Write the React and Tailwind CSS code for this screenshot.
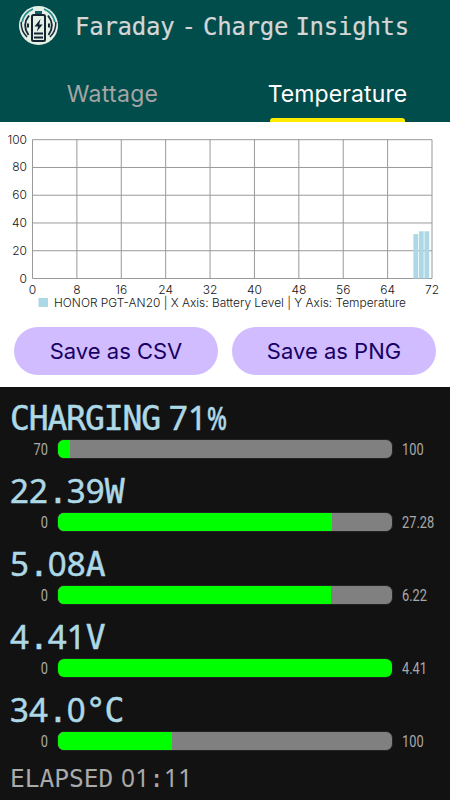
const GRID_X = [0, 8, 16, 24, 32, 40, 48, 56, 64, 72]
const GRID_Y = [0, 20, 40, 60, 80, 100]

const samples = [
  { level: 69, temp: 32 },
  { level: 70, temp: 34 },
  { level: 71, temp: 34 }
]

const metrics = [
  { label: 'CHARGING 71%', min: '70', max: '100', fill: 3.6 },
  { label: '22.39W', min: '0', max: '27.28', fill: 82.1 },
  { label: '5.08A', min: '0', max: '6.22', fill: 81.7 },
  { label: '4.41V', min: '0', max: '4.41', fill: 100 },
  { label: '34.0°C', min: '0', max: '100', fill: 34.2 }
]

// digits use an undotted zero, everything else stays monospaced
function MonoText({ text }) {
  return text.split(/(\d+|%)/).map((part, i) => {
    if (part === '%') {
      return <span key={i} className="inline-block w-[19px] origin-left scale-x-[0.71] font-['Noto_Sans',sans-serif] font-medium">%</span>
    }
    return /\d/.test(part)
      ? <span key={i} className="font-['Noto_Sans',sans-serif] tracking-[0.004em]">{part}</span>
      : <span key={i}>{part}</span>
  })
}

function Logo() {
  return (
    <svg className="size-10 shrink-0" viewBox="0 0 40 40" fill="none">
      <circle cx="20.5" cy="20.5" r="19.5" fill="#e4efe6" />
      <path d="M15 4Q6 8 4 17" stroke="#258e91" strokeWidth="1.8" />
      <path d="M26 4Q35 8 37 17" stroke="#258e91" strokeWidth="1.8" />
      <path d="M3.2 17Q2.8 26 9 32M37.8 17Q38.2 26 32 32" stroke="#182c3b" strokeWidth="1.5" />
      <path d="M11 10.5Q3.5 20 10.5 30M30 10.5Q37.5 20 30.5 30" stroke="#172936" strokeWidth="1.9" />
      <path d="M10 18.5v4M31 18.5v4" stroke="#172936" strokeWidth="2" />
      <path d="M17 6h7v4h-7z" fill="#155a69" />
      <rect x="14" y="10" width="13" height="26" rx="1.5" fill="#e4efe6" stroke="#142330" strokeWidth="2" />
      <path d="m22.5 14-6 7.500h3.700l-1.400 5 5.900-7h-3.500z" fill="#142330" />
      <path d="M16 28.500h9M16 32.500h9" stroke="#142330" strokeWidth="2.200" />
    </svg>
  )
}

function Chart() {
  const x = v => 32.5 + (v / 72) * 399.5
  const y = v => 156.5 - v * 1.388
  return (
    <svg className="block h-[197px] w-[450px] font-[Inter,sans-serif]" viewBox="0 0 450 197" fill="#151515">
      <g stroke="#999" strokeWidth="1">
        {GRID_X.map(v => <path key={v} d={`M${x(v)} 17.5V156.5`} />)}
        {GRID_Y.map(v => <path key={v} d={`M32.5 ${y(v)}H432`} />)}
      </g>
      {samples.map(s => (
        <rect key={s.level} x={x(s.level) - 2} y={y(s.temp)} width="4.8" height={s.temp * 1.388} fill="#add8e6" />
      ))}
      <g fontSize="12" fontWeight="300">
        {GRID_Y.map(v => <text key={v} x="27" y={y(v) + 4} textAnchor="end">{v}</text>)}
        {GRID_X.map(v => <text key={v} x={x(v)} y="172" textAnchor="middle">{v}</text>)}
        <text x="54" y="185" textLength="352" lengthAdjust="spacingAndGlyphs">HONOR PGT-AN20 | X Axis: Battery Level | Y Axis: Temperature</text>
      </g>
      <rect x="38.5" y="176" width="9.5" height="9" fill="#add8e6" />
    </svg>
  )
}

function Metric({ label, min, max, fill }) {
  return (
    <div className="h-[73.1px]">
      <div className="h-[45px] pt-px pl-[10px] font-['DejaVu_Sans_Mono',monospace] text-[33px] leading-[45px] tracking-[-1.1px] whitespace-nowrap text-[#add8e6] [-webkit-text-stroke:0.5px_#add8e6] [word-spacing:-10px]">
        <MonoText text={label} />
      </div>
      <div className="flex h-5 items-center font-[Roboto,sans-serif] text-base leading-5 text-[#aaa]">
        <div className="w-12 shrink-0">
          <div className="origin-right translate-y-px scale-x-[0.8] text-right">{min}</div>
        </div>
        <div className="ml-[9px] h-5 w-[336px] shrink-0 overflow-hidden rounded-[7px] border border-[#222] bg-[#808080]">
          <div className="h-full bg-[#00ff00]" style={{ width: `${fill}%` }} />
        </div>
        <div className="ml-[9px] origin-left translate-y-px scale-x-[0.8]">{max}</div>
      </div>
    </div>
  )
}

export default function App() {
  return (
    <div className="h-[800px] w-[450px] overflow-hidden bg-[#121212]">
      <header className="h-[122px] bg-[#004d4c]">
        <div className="flex h-[64px] items-start pt-[5px] pl-[18px]">
          <Logo />
          <h1 className="ml-[17px] pt-px font-['DejaVu_Sans_Mono',monospace] text-[24px] leading-[42px] tracking-[-0.25px] whitespace-nowrap text-[#d6d6d6] [-webkit-text-stroke:0.2px_#d6d6d6] [word-spacing:-7px]">
            Faraday - Charge Insights
          </h1>
        </div>
        <nav className="grid h-[58px] grid-cols-2 font-[Inter,sans-serif] text-[23px]">
          <button className="flex flex-col items-center pt-[12px] leading-[36px] tracking-[0.3px] text-[#a5a5a5]" type="button">Wattage</button>
          <button className="flex flex-col items-center pt-[12px] leading-[36px] text-white" type="button">
            <span className="tracking-[0.1px]">Temperature</span>
            <span className="mt-auto h-1 w-[135px] rounded-t-[3px] bg-[#ffeb00]" />
          </button>
        </nav>
      </header>

      <main className="h-[264.5px] bg-white">
        <Chart />
        <div className="flex gap-[14px] px-[14px] pt-[7.5px] font-[Inter,sans-serif] text-[22px] text-[#190064]">
          <button className="h-12 w-[204px] rounded-full bg-[#d0bcff] pt-px" type="button">Save as CSV</button>
          <button className="h-12 w-[204px] rounded-full bg-[#d0bcff] pt-px" type="button">Save as PNG</button>
        </div>
      </main>

      <section className="pt-[7.5px]">
        {metrics.map(m => <Metric key={m.label} {...m} />)}
        <div className="pt-px pl-[10px] font-['DejaVu_Sans_Mono',monospace] text-[24.500px] leading-[36px] whitespace-nowrap text-[#aaa] [word-spacing:-7px]">
          <MonoText text="ELAPSED 01:11" />
        </div>
      </section>
    </div>
  )
}
